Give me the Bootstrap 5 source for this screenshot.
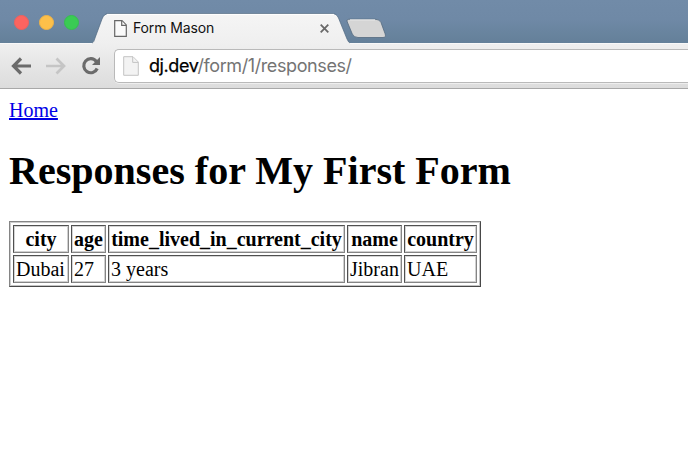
<!DOCTYPE html>
<html lang="en">
<head>
<meta charset="utf-8">
<meta name="viewport" content="width=device-width, initial-scale=1">
<title>Form Mason</title>
<link href="https://cdn.jsdelivr.net/npm/bootstrap@5.3.0/dist/css/bootstrap.min.css" rel="stylesheet">
<style>
body{font-family:"Liberation Serif",serif;font-size:20px;line-height:23px;color:#000}
.titlebar{height:43px;background:linear-gradient(#718ba8,#6f89a6 45%,#648099);padding-left:14px}
.lights{gap:10px;padding-top:1px;width:78px}
.light{width:15px;height:15px;border-radius:50%;border:1px solid #f0605c;background:#fc6460}
.light.wait{background:#fdc04a;border-color:#efb347}
.light.go{background:#3acb54;border-color:#37bd4f}
.browser-tab{width:258px;height:30px;margin-top:13px;padding-left:22px;padding-right:21px}
.tab-shape{left:0;top:0}
.tab-title{font:14px/20px Inter,sans-serif;letter-spacing:-.13px;color:#111;margin-left:6px}
.new-tab{margin:18px 0 0 -5px}
.toolbar{height:46px;background:linear-gradient(#efefef,#dcdcdc);border-top:1px solid #f8f8f8;border-bottom:1px solid #a8a8a8;padding-left:11px}
.address{height:34px;margin-left:13px;margin-top:-1px;background:#fff;border:1px solid #b9b9b9;border-right:0;border-radius:5px 0 0 5px;padding-left:8px;box-shadow:0 1px 0 #eee}
.url{font:18px/24px Inter,sans-serif;letter-spacing:-.4px;color:#747474;margin-left:10px;white-space:nowrap}
.url .host{-webkit-text-stroke:.25px #000}
.page{padding:10px 9px}
.page h1{font-size:40.050px;line-height:46px;font-weight:700;margin:26px 0 27px}
.home-link{color:#0000e6;text-underline-offset:1px;text-decoration-thickness:1.5px;line-height:22px;padding-bottom:1px}
.responses{border-collapse:separate;border-spacing:2px;border:1px solid;border-color:#858585 #484848 #484848 #858585;box-shadow:inset 1px 1px #ccc,inset -1px -1px #c4c4c4;padding:1px;table-layout:fixed;width:472px;height:65px}
.responses th,.responses td{border:1px solid;border-color:#505050 #858585 #858585 #505050;box-shadow:inset 1px 1px #d5d5d5,inset -1px -1px #d0d0d0;padding:0 1px 0 2px;white-space:nowrap;height:28px}
.responses th{padding:0}
</style>
</head>
<body class="bg-white overflow-hidden">
<header>
  <div class="titlebar d-flex">
    <div class="lights d-flex align-items-center flex-shrink-0">
      <span class="light"></span><span class="light wait"></span><span class="light go"></span>
    </div>
    <div class="browser-tab position-relative d-flex align-items-center flex-shrink-0">
      <svg class="tab-shape position-absolute" width="258" height="31" viewBox="0 0 258 31">
        <defs><linearGradient id="tabfill" x2="0" y2="1"><stop stop-color="#f5f5f5"/><stop offset="1" stop-color="#efefef"/></linearGradient></defs>
        <path d="M-1 31V30C1 30 2 28 3 25L10 6Q12 .8 17 .8H240Q244.500 .8 246.500 5L255 26Q256.500 30 259 30V31Z" fill="url(#tabfill)"/>
        <path d="M0 30C2 29 2 28 3 25L10 6Q12 .5 17 .5H240Q244.500 .5 246.500 5L255 26Q256.500 29.500 258 30" fill="none" stroke="#4f6780" stroke-width=".7"/>
        <path d="M15 1.400H242" stroke="#fff"/>
      </svg>
      <svg class="position-relative" width="13" height="17" viewBox="0 0 13 17" fill="#fafafa" stroke="#676767" stroke-width="1.200"><path d="M.7 .7H8L12.300 5V16.300H.7Z"/><path d="M7.700 1V5.400H12"/></svg>
      <span class="tab-title position-relative">Form Mason</span>
      <svg class="position-relative ms-auto" width="9" height="9" viewBox="0 0 9 9" stroke="#696969" stroke-width="1.800"><path d="M.7 .7L8.300 8.300M8.300 .7L.7 8.300"/></svg>
    </div>
    <svg class="new-tab flex-shrink-0" width="42" height="21" viewBox="0 0 42 21"><path d="M5 1.200H30Q34.500 1.200 36 4.500L40 15.500Q41.500 19.500 38 19.500H13Q9 19.500 7.300 16L2.300 4Q1 1.200 5 1.200Z" fill="#d5d5d5" stroke="#54697f" stroke-width=".8"/><path d="M5 1.900H30" stroke="#eee"/></svg>
  </div>
  <div class="toolbar d-flex align-items-center">
    <svg class="flex-shrink-0" width="90" height="20" viewBox="0 0 90 20" fill="none" stroke-width="3.200">
      <path d="M2.500 10H20M10 2.500L2.500 10L10 17.500" stroke="#6b6b6b"/>
      <path d="M35 10H53M45.500 2.500L53 10L45.500 17.500" stroke="#c5c5c5" stroke-width="2.700"/>
      <path d="M86.200 12.500A7 7 0 1 1 85.300 5.400" stroke="#6b6b6b"/><path d="M89 1V9H81Z" fill="#6b6b6b"/>
    </svg>
    <div class="address d-flex align-items-center flex-grow-1">
      <svg class="flex-shrink-0" width="16" height="20" viewBox="0 0 16 20" fill="#f3f3f3" stroke="#c3c3c3"><path d="M.7 .7H10L15.300 6V19.300H.7Z"/><path d="M9.700 1V6.400H15"/></svg>
      <div class="url"><span class="host text-black">dj.dev</span>/form/1/responses/</div>
    </div>
  </div>
</header>
<main class="page">
  <a class="home-link d-block" href="#">Home</a>
  <h1>Responses for My First Form</h1>
  <table class="responses">
    <colgroup><col style="width:56px"><col style="width:35px"><col style="width:237px"><col style="width:55px"><col style="width:73px"></colgroup>
    <thead><tr class="text-center"><th>city</th><th>age</th><th>time_lived_in_current_city</th><th>name</th><th>country</th></tr></thead>
    <tbody><tr><td>Dubai</td><td>27</td><td>3 years</td><td>Jibran</td><td>UAE</td></tr></tbody>
  </table>
</main>
<script src="https://cdn.jsdelivr.net/npm/bootstrap@5.3.0/dist/js/bootstrap.bundle.min.js"></script>
</body>
</html>
